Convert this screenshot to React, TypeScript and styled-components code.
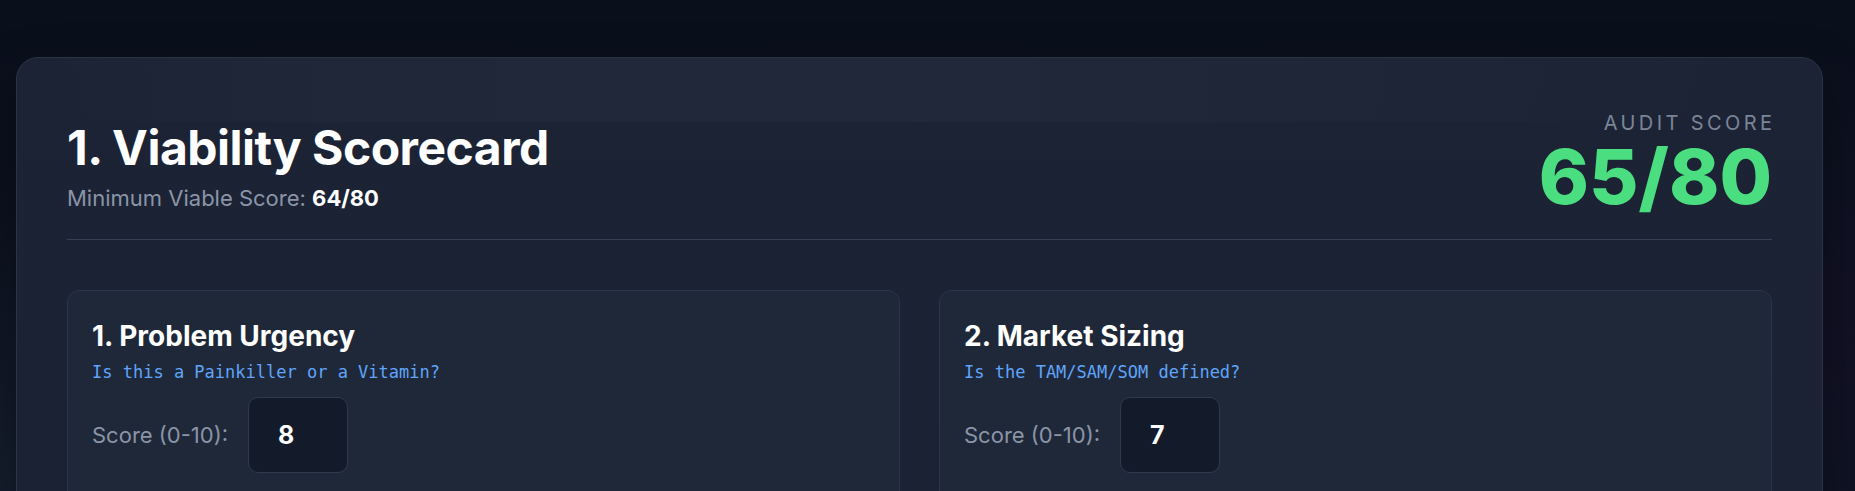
import React from "react";
import styled, { createGlobalStyle } from "styled-components";

type Criterion = {
  id: number;
  title: string;
  question: string;
  score: number;
};

const criteria: Criterion[] = [
  { id: 1, title: "Problem Urgency", question: "Is this a Painkiller or a Vitamin?", score: 8 },
  { id: 2, title: "Market Sizing", question: "Is the TAM/SAM/SOM defined?", score: 7 },
];

const GlobalStyle = createGlobalStyle`
  html, body {
    margin: 0;
    padding: 0;
    background: #0b101d;
  }
  body {
    font-family: Inter, "Noto Sans", sans-serif;
    color: #f1f5f9;
  }
`;

const Page = styled.div`
  min-height: 491px;
  box-sizing: border-box;
  padding: 57px 32px 0 16px;
  background:
    radial-gradient(ellipse 900px 500px at 0% 100%, rgba(30, 41, 59, 0.55), transparent 70%),
    radial-gradient(ellipse 700px 400px at 100% 60%, rgba(22, 16, 40, 0.6), transparent 70%),
    linear-gradient(180deg, #0a0f1c 0%, #0e1524 100%);
`;

const Panel = styled.section`
  box-sizing: border-box;
  border: 1px solid #2b3445;
  border-radius: 22px;
  padding: 53px 50px 40px;
  background:
    linear-gradient(90deg, rgba(255, 255, 255, 0) 0%, rgba(255, 255, 255, 0.02) 20%, rgba(255, 255, 255, 0.025) 50%, rgba(255, 255, 255, 0) 100%) top / 100% 64px no-repeat,
    linear-gradient(180deg, #1b2335 0%, #1a2233 100%);
  box-shadow: 0 20px 50px rgba(0, 0, 0, 0.35);
`;

const Header = styled.header`
  display: flex;
  justify-content: space-between;
  align-items: flex-end;
  padding-bottom: 28px;
  border-bottom: 1px solid #364153;
  margin-bottom: 50px;
`;

const TitleBlock = styled.div`
  display: flex;
  flex-direction: column;
`;

const Title = styled.h1`
  margin: 0 0 8px;
  font-size: 48px;
  line-height: 1.2;
  font-weight: 700;
  letter-spacing: -0.5px;
  color: #ffffff;
`;

const Subtitle = styled.p`
  margin: 0;
  font-size: 22px;
  line-height: 1.2;
  color: #8b95a7;

  strong {
    color: #ffffff;
    font-weight: 700;
  }
`;

const ScoreBlock = styled.div`
  display: flex;
  flex-direction: column;
  align-items: flex-end;
  margin-bottom: -3px;
`;

const ScoreLabel = styled.span`
  font-size: 20px;
  line-height: 1.2;
  letter-spacing: 0.17em;
  margin-right: -0.17em;
  margin-bottom: 3px;
  color: #7b8598;
  text-transform: uppercase;
`;

const ScoreValue = styled.span`
  font-size: 76px;
  line-height: 1;
  font-weight: 800;
  color: #4ade80;
`;

const Grid = styled.div`
  display: grid;
  grid-template-columns: 1fr 1fr;
  gap: 39px;
`;

const Card = styled.article`
  box-sizing: border-box;
  border: 1px solid #2b3547;
  border-radius: 12px;
  padding: 29px 24px 40px;
  background: #1e2839;
`;

const CardTitle = styled.h3`
  margin: 0 0 6px;
  font-size: 28px;
  line-height: 1.2;
  font-weight: 700;
  color: #ffffff;
`;

const Question = styled.p`
  margin: 0 0 13px;
  font-family: "DejaVu Sans Mono", "Liberation Mono", monospace;
  font-size: 17px;
  line-height: 24px;
  color: #60a5fa;
`;

const Field = styled.label`
  display: flex;
  align-items: center;
  gap: 20px;
  font-size: 22px;
  color: #8b95a7;
`;

const ScoreInput = styled.input`
  box-sizing: border-box;
  width: 100px;
  height: 76px;
  padding: 0 29px;
  border: 1px solid #2f3a4c;
  border-radius: 10px;
  background: #131b2a;
  color: #ffffff;
  font-family: Inter, "Noto Sans", sans-serif;
  font-size: 25px;
  font-weight: 700;
  outline: none;
`;

const CriterionCard: React.FC<{ item: Criterion }> = ({ item }) => (
  <Card>
    <CardTitle>
      {item.id}. {item.title}
    </CardTitle>
    <Question>{item.question}</Question>
    <Field>
      Score (0-10):
      <ScoreInput type="number" min={0} max={10} defaultValue={item.score} />
    </Field>
  </Card>
);

const App: React.FC = () => {
  return (
    <>
      <GlobalStyle />
      <Page>
        <Panel>
          <Header>
            <TitleBlock>
              <Title>1. Viability Scorecard</Title>
              <Subtitle>
                Minimum Viable Score: <strong>64/80</strong>
              </Subtitle>
            </TitleBlock>
            <ScoreBlock>
              <ScoreLabel>Audit Score</ScoreLabel>
              <ScoreValue>65/80</ScoreValue>
            </ScoreBlock>
          </Header>
          <Grid>
            {criteria.map((c) => (
              <CriterionCard key={c.id} item={c} />
            ))}
          </Grid>
        </Panel>
      </Page>
    </>
  );
};

export default App;
